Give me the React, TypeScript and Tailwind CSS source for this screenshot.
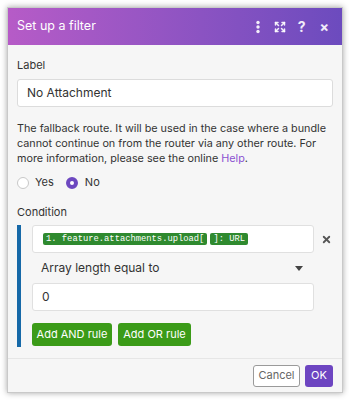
import { X, Expand } from 'lucide-react';

const FONT = { fontFamily: 'Inter, "Noto Sans", sans-serif' };
const MONO = { fontFamily: '"Liberation Mono", "Courier New", monospace' };

function HeaderIcons() {
  return (
    <div className="flex items-center text-white/90">
      <svg width="6" height="14" viewBox="0 0 6 14" className="fill-current">
        <circle cx="3" cy="2.5" r="1.7" />
        <circle cx="3" cy="7" r="1.7" />
        <circle cx="3" cy="11.5" r="1.7" />
      </svg>
      <Expand className="ml-[13px] h-[12px] w-[12px]" strokeWidth={3} />
      <span className="ml-[12px] text-[14px] font-bold leading-none">?</span>
      <span className="ml-[14px] text-[14px] font-bold leading-none">×</span>
    </div>
  );
}

export default function App() {
  return (
    <div className="h-[400px] w-[349px] bg-white pl-[7px] pt-[7px]" style={FONT}>
      <div className="flex h-[386px] w-[336px] flex-col overflow-hidden border border-[#c9c9c9] bg-[#f6f6f6] shadow-[0_0_6px_rgba(0,0,0,0.35)]">
        <div className="flex h-[37px] shrink-0 items-center justify-between bg-gradient-to-r from-[#b65bc7] to-[#6c4bbe] pl-[9px] pr-[13px]">
          <span className="text-[12.5px] text-white">Set up a filter</span>
          <HeaderIcons />
        </div>

        <div className="flex-1 px-[9px] pt-[13px]">
          <div className="text-[11px] leading-[14px] text-[#333]">Label</div>
          <div className="mt-[7px] flex h-[28px] items-center rounded-[3px] border border-[#dcdcdc] bg-white px-[9px] text-[12px] text-[#333]">
            No Attachment
          </div>
          <p className="mt-[14px] text-[10.8px] leading-[15px] text-[#333]">
            The fallback route. It will be used in the case where a bundle cannot continue on from the router via any other route. For more information, please see the online <span className="text-[#8b52d1]">Help</span>.
          </p>
          <div className="mt-[10px] flex h-[13px] items-center text-[11px] text-[#333]">
            <span className="h-[12px] w-[12px] shrink-0 rounded-full border border-[#c8c8c8] bg-white" />
            <span className="ml-[6px]">Yes</span>
            <span className="ml-[12px] h-[12px] w-[12px] shrink-0 rounded-full border-[4px] border-[#6d48c0] bg-white" />
            <span className="ml-[7px]">No</span>
          </div>
          <div className="mt-[16px] text-[11px] leading-[14px] text-[#333]">Condition</div>

          <div className="mt-[6px] flex border-l-[4px] border-[#1669a8]">
            <div className="flex-1 pl-[11px]">
              <div className="flex items-center">
                <div className="flex h-[28px] w-[282px] items-center gap-[3px] rounded-[3px] border border-[#e0e0e0] bg-white px-[10px]">
                  <span className="rounded-[2px] bg-[#2f8a2f] px-[3px] text-[8.8px] leading-[12px] text-white" style={MONO}>
                    1. feature.attachments.upload[
                  </span>
                  <span className="rounded-[2px] bg-[#2f8a2f] px-[3px] text-[8.8px] leading-[12px] text-white" style={MONO}>
                    ]: URL
                  </span>
                </div>
                <X className="ml-[7px] h-[11px] w-[11px] text-[#555]" strokeWidth={4} />
              </div>
              <div className="flex h-[30px] w-[282px] items-center justify-between pl-[9px] pr-[11px] text-[12px] text-[#333]">
                <span>Array length equal to</span>
                <svg width="8" height="5" viewBox="0 0 8 5"><path d="M0 0h8L4 5z" fill="#444" /></svg>
              </div>
              <div className="flex h-[28px] w-[282px] items-center rounded-[3px] border border-[#e0e0e0] bg-white px-[9px] text-[12px] text-[#333]">
                0
              </div>
              <div className="mt-[12px] flex gap-[6px] pb-[1px]">
                <button className="h-[23px] w-[80px] rounded-[3px] bg-[#3b9b18] text-[11px] text-white">Add AND rule</button>
                <button className="h-[23px] w-[73px] rounded-[3px] bg-[#3b9b18] text-[11px] text-white">Add OR rule</button>
              </div>
            </div>
          </div>
        </div>

        <div className="flex h-[34px] shrink-0 items-center justify-end gap-[5px] border-t border-[#e6e6e6] pr-[9px]">
          <button className="h-[22px] w-[47px] rounded-[3px] border border-[#9a9a9a] bg-white text-[11px] text-[#666]">Cancel</button>
          <button className="h-[22px] w-[28px] rounded-[3px] bg-[#6d45c1] text-[11px] text-white">OK</button>
        </div>
      </div>
    </div>
  );
}
